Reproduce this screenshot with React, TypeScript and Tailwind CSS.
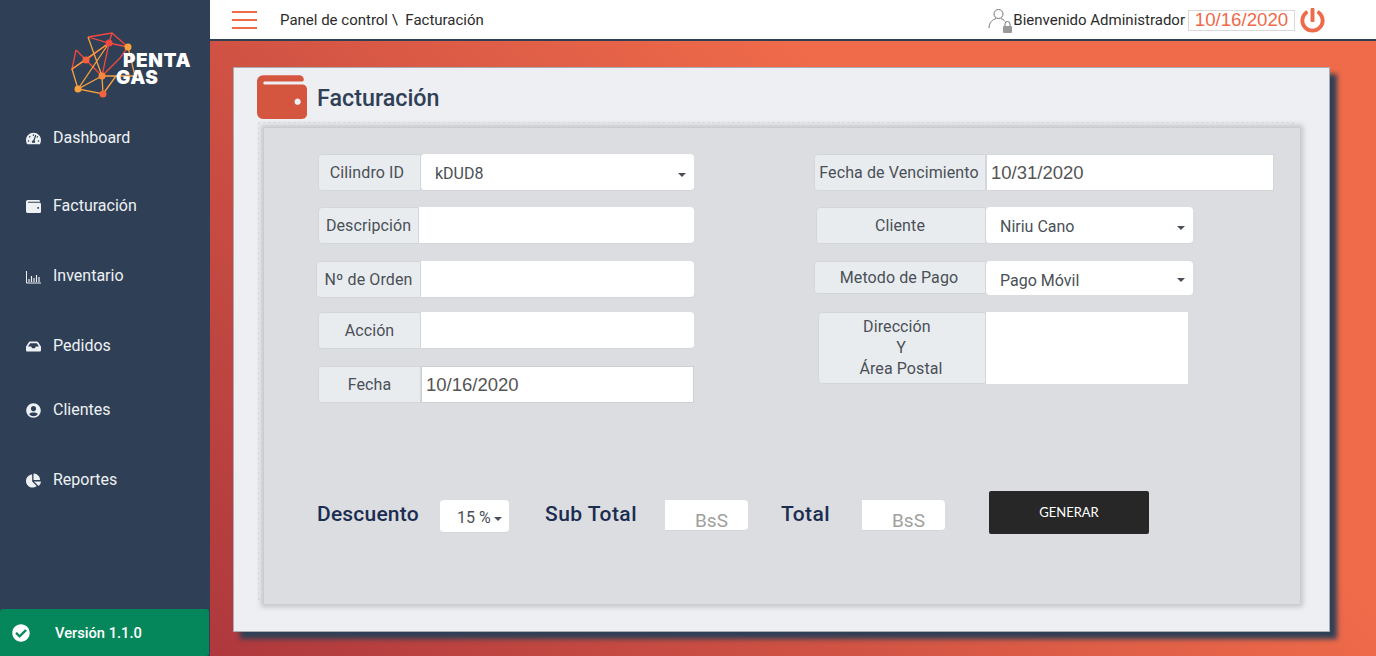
import type { ReactNode } from "react";
import {
  FaTachometerAlt,
  FaWallet,
  FaInbox,
  FaUserCircle,
  FaChartPie,
  FaCheckCircle,
  FaPowerOff,
} from "react-icons/fa";

function ChartIcon() {
  return (
    <svg width="15" height="15" viewBox="0 0 15 15" fill="none" stroke="currentColor">
      <path d="M0.5 2v12h14.500" />
      <path d="M3 13v-3M5.500 13V7M8 13V9M10.500 13V6M13 13V8" strokeWidth="1.2" />
    </svg>
  );
}

function Logo() {
  const orange = "#f9a03f";
  const red = "#f2483f";
  return (
    <div className="relative h-[70px] w-[125px]">
      <svg width="125" height="70" viewBox="70 30 125 70" fill="none" strokeWidth="1.3">
        <path d="M88 37L112 33L128 47L109 43L88 37M112 33L109 43M109 43L102 76M109 43L86 60M76 50L86 60L72 69L76 50M86 60L102 76L120 58L128 47L109 43" stroke={red} />
        <path d="M88 37L102 76M109 43L72 69L78 89L109 43M102 76L78 89L103 94L102 76M128 47L135 76L102 76M72 69L78 89M103 94L116 76" stroke={orange} />
        <circle cx="109" cy="43" r="3.5" fill={red} />
        <circle cx="128" cy="47" r="3.5" fill={orange} />
        <circle cx="86" cy="60" r="3.5" fill="#f5603f" />
        <circle cx="102" cy="76" r="3.5" fill="#f98a3c" />
        <circle cx="78" cy="89" r="3.5" fill={orange} />
        <circle cx="103" cy="94" r="3.5" fill="#f5603f" />
      </svg>
      <div className="absolute left-[53px] top-[22px] font-['Inter',sans-serif] text-[19px] leading-[17px] font-black tracking-[0.6px] text-white">
        PENTA
        <br />
        <span className="ml-[-7px]">GAS</span>
      </div>
    </div>
  );
}

const navItems = [
  { icon: <FaTachometerAlt size={15} />, label: "Dashboard", margin: "mt-0" },
  { icon: <FaWallet size={15} />, label: "Facturación", margin: "mt-[44px]" },
  { icon: <ChartIcon />, label: "Inventario", margin: "mt-[46px]" },
  { icon: <FaInbox size={15} />, label: "Pedidos", margin: "mt-[46px]" },
  { icon: <FaUserCircle size={15} />, label: "Clientes", margin: "mt-[40px]" },
  { icon: <FaChartPie size={15} />, label: "Reportes", margin: "mt-[46px]" },
];

function Sidebar() {
  return (
    <aside className="flex w-[210px] shrink-0 flex-col bg-[#2f4056] text-[#eef1f4]">
      <div className="h-[126px] pl-[70px] pt-[30px]">
        <Logo />
      </div>
      <nav className="flex flex-col">
        {navItems.map((item) => (
          <div key={item.label} className={`flex h-[24px] items-center pl-[26px] text-[16px] ${item.margin}`}>
            <span className="flex w-[27px] shrink-0">{item.icon}</span>
            {item.label}
          </div>
        ))}
      </nav>
      <div className="mt-auto mr-[1px] flex h-[47px] items-center rounded-t-[3px] rounded-r-[3px] bg-[#06875b] pl-[12px] text-[14.7px] font-medium text-white">
        <FaCheckCircle size={18} />
        <span className="ml-[25px] pt-[1px]">Versión 1.1.0</span>
      </div>
    </aside>
  );
}

function UserLockIcon() {
  return (
    <svg width="26" height="26" viewBox="0 0 26 26" fill="none" stroke="#777">
      <circle cx="10.5" cy="7" r="4.5" />
      <path d="M1 21c0-6 4-8.500 7-9.500M13 11.500c1.500.5 3 1.500 4 3" />
      <rect x="15" y="19" width="9" height="7" rx="1" fill="#999" stroke="none" />
      <path d="M17 19v-2a2.500 2.500 0 0 1 5 0v2" />
    </svg>
  );
}

function Topbar() {
  return (
    <header className="flex h-[41px] shrink-0 items-center border-b-2 border-[#2f4056] bg-white pl-[22px] pr-[51px]">
      <div className="flex w-[25px] flex-col gap-[6px]">
        <span className="h-[2px] bg-[#ee6a4a]" />
        <span className="h-[2px] bg-[#ee6a4a]" />
        <span className="h-[2px] bg-[#ee6a4a]" />
      </div>
      <span className="ml-[23px] pt-[1px] text-[15px] text-[#2b2b2b]">Panel de control \&nbsp; Facturación</span>
      <div className="ml-auto flex items-center">
        <UserLockIcon />
        <span className="ml-[-1px] pt-[2px] text-[15px] text-[#2b2b2b]">Bienvenido Administrador</span>
        <span className="ml-[3px] mt-[2px] flex h-[21px] w-[107px] items-center justify-center border border-[#d9d9d9] font-['Liberation_Sans',sans-serif] text-[18.7px] text-[#f0694a]">
          10/16/2020
        </span>
        <FaPowerOff size={25} className="ml-[5px] mt-[1px] text-[#ee6a4a]" />
      </div>
    </header>
  );
}

type FieldProps = {
  label: ReactNode;
  labelClass: string;
  inputClass: string;
  children?: ReactNode;
};

function Field({ label, labelClass, inputClass, children }: FieldProps) {
  return (
    <div className="flex">
      <div className={`flex shrink-0 items-center justify-center rounded-l-[4px] border border-[#d3d7db] bg-[#e9ecef] text-center text-[16px] leading-[21px] tracking-[0.1px] text-[#495057] ${labelClass}`}>
        {label}
      </div>
      <div className={`relative flex items-center bg-white text-[16px] text-[#495057] ${inputClass}`}>{children}</div>
    </div>
  );
}

function Caret() {
  return <span className="h-0 w-0 border-x-[4px] border-t-[4px] border-x-transparent border-t-[#495057]" />;
}

function SelectValue({ value }: { value: string }) {
  return (
    <>
      <span className="pl-[14px] pt-[4px]">{value}</span>
      <span className="absolute right-[8px] top-[19px] flex">
        <Caret />
      </span>
    </>
  );
}

function DateValue({ value }: { value: string }) {
  return <span className="pl-[4px] font-['Liberation_Sans',sans-serif] text-[18.5px] text-[#555]">{value}</span>;
}

const leftInput = "h-[37px] rounded-r-[4px] border-b border-[#d3d7db]";

function LeftColumn() {
  return (
    <div className="flex w-[378px] flex-col">
      <div className="ml-[1px]">
        <Field label="Cilindro ID" labelClass="h-[37px] w-[103px] pr-[5px]" inputClass={`${leftInput} w-[273px] rounded-l-[4px]`}>
          <SelectValue value="kDUD8" />
        </Field>
      </div>
      <div className="ml-[1px] mt-[16px]">
        <Field label="Descripción" labelClass="h-[37px] w-[101px]" inputClass={`${leftInput} w-[275px]`} />
      </div>
      <div className="ml-[-1px] mt-[17px]">
        <Field label="Nº de Orden" labelClass="h-[37px] w-[105px]" inputClass={`${leftInput} w-[273px]`} />
      </div>
      <div className="ml-[1px] mt-[14px]">
        <Field label="Acción" labelClass="h-[37px] w-[103px]" inputClass={`${leftInput} w-[273px]`} />
      </div>
      <div className="ml-[1px] mt-[17px]">
        <Field label="Fecha" labelClass="h-[37px] w-[103px]" inputClass="h-[37px] w-[273px] border border-[#cfcfcf]">
          <DateValue value="10/16/2020" />
        </Field>
      </div>
    </div>
  );
}

function RightColumn() {
  return (
    <div className="ml-[119px] flex flex-col">
      <Field label="Fecha de Vencimiento" labelClass="h-[37px] w-[172px] pr-[2px]" inputClass="h-[37px] w-[288px] border border-[#d3d7db]">
        <DateValue value="10/31/2020" />
      </Field>
      <div className="ml-[2px] mt-[16px]">
        <Field label="Cliente" labelClass="h-[37px] w-[170px] pr-[2px]" inputClass="h-[37px] w-[207px] rounded-[4px] border-b border-[#d3d7db]">
          <SelectValue value="Niriu Cano" />
        </Field>
      </div>
      <div className="mt-[17px]">
        <Field label="Metodo de Pago" labelClass="h-[33px] w-[172px] pr-[2px]" inputClass="h-[34px] w-[207px] rounded-[4px]">
          <span className="pl-[14px] pt-[6px]">Pago Móvil</span>
          <span className="absolute right-[8px] top-[17px] flex">
            <Caret />
          </span>
        </Field>
      </div>
      <div className="ml-[4px] mt-[17px]">
        <Field
          label={
            <>
              Dirección&nbsp;&nbsp;
              <br />Y<br />
              Área Postal
            </>
          }
          labelClass="h-[72px] w-[168px] pb-[2px] pr-[2px]"
          inputClass="h-[72px] w-[202px]"
        />
      </div>
    </div>
  );
}

function Heading({ children, size }: { children: ReactNode; size: string }) {
  return (
    <span className={`mt-[8px] shrink-0 text-[21px] font-medium leading-[30px] whitespace-nowrap text-[#1b2d50] ${size}`}>
      {children}
    </span>
  );
}

function Amount({ margin }: { margin: string }) {
  return (
    <div className={`mt-[9px] flex h-[31px] w-[83px] items-end justify-center rounded-r-[4px] border-b border-[#d3d7db] bg-white pl-[10px] text-[19px] leading-[19px] text-[#a0a0a0] ${margin}`}>
      BsS
    </div>
  );
}

function Totals() {
  return (
    <div className="mt-[88px] flex h-[43px] items-start">
      <Heading size="w-[102px] tracking-[0.2px]">Descuento</Heading>
      <div className="ml-[21px] mt-[9px] flex h-[33px] w-[69px] items-center rounded-[4px] border-b border-[#d3d7db] bg-white pl-[17px] pt-[4px] text-[16px] text-[#495057]">
        15 %
        <span className="ml-[3px] flex pt-[1px]">
          <Caret />
        </span>
      </div>
      <Heading size="ml-[36px] w-[92px] tracking-[0.45px]">Sub Total</Heading>
      <Amount margin="ml-[28px]" />
      <Heading size="ml-[33px] w-[49px] tracking-[0.4px]">Total</Heading>
      <Amount margin="ml-[32px]" />
      <button className="ml-[44px] h-[43px] w-[160px] rounded-[2px] bg-[#272727] font-['Lato',sans-serif] text-[13px] text-white">
        GENERAR
      </button>
    </div>
  );
}

export default function App() {
  return (
    <div className="flex h-[656px] w-[1376px] overflow-hidden font-['Roboto',sans-serif]">
      <Sidebar />
      <main className="flex min-w-0 flex-1 flex-col">
        <Topbar />
        <div className="flex-1 bg-[linear-gradient(45deg,#ae383d_0%,#f06b4a_68%)] pl-[23px] pt-[26px]">
          <section className="h-[565px] w-[1097px] border border-[#a9adb3] bg-[#edeff3] shadow-[7px_7px_5px_#2f4056]">
            <div className="flex h-[54px] items-start pl-[23px] pt-[7px]">
              <FaWallet size={50} className="mt-[-3px] text-[#d4563f]" />
              <h1 className="ml-[10px] mt-[9px] text-[23.3px] font-medium leading-[28px] text-[#2f4056]">Facturación</h1>
            </div>
            <div className="ml-[24px] h-[478px] w-[1036px] border border-dashed border-[#dcdee2]">
              <div className="ml-[5px] mt-[5px] h-[476px] w-[1036px] bg-[#dcdde1] pl-[53px] pt-[26px] shadow-[0_0_5px_3px_#c4c5c8]">
                <div className="flex">
                  <LeftColumn />
                  <RightColumn />
                </div>
                <Totals />
              </div>
            </div>
          </section>
        </div>
      </main>
    </div>
  );
}
